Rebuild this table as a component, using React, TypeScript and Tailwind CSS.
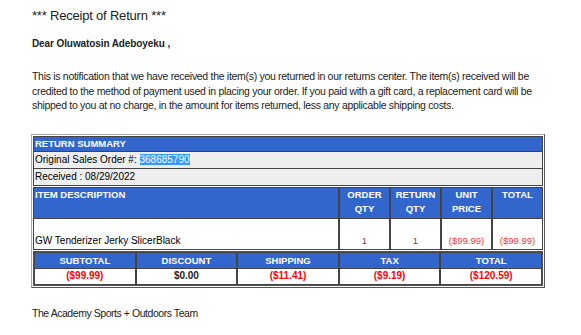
const totals = [
  { label: "SUBTOTAL", value: "($99.99)", red: true },
  { label: "DISCOUNT", value: "$0.00", red: false },
  { label: "SHIPPING", value: "($11.41)", red: true },
  { label: "TAX", value: "($9.19)", red: true },
  { label: "TOTAL", value: "($120.59)", red: true },
];

export default function App() {
  const head = "bg-[#3366cc] text-white font-bold text-[9.5px] border border-[#444]";
  const cell = "border border-[#444] bg-white";

  return (
    <div className="min-h-screen bg-white text-[#222] font-['Liberation_Sans',Arial,sans-serif] pl-[32px] pt-[7px]">
      <div className="text-[13px] leading-[18px] tracking-[-0.2px]">*** Receipt of Return ***</div>
      <div className="mt-[12px] text-[10px] font-bold leading-[14px] tracking-[-0.1px]">Dear Oluwatosin Adeboyeku ,</div>
      <p className="mt-[18px] text-[10.5px] leading-[14.5px] tracking-[-0.3px] whitespace-nowrap">
        This is notification that we have received the item(s) you returned in our returns center. The item(s) received will be
        <br />
        credited to the method of payment used in placing your order. If you paid with a gift card, a replacement card will be
        <br />
        shipped to you at no charge, in the amount for items returned, less any applicable shipping costs.
      </p>

      <div className="mt-[21px] -ml-[1px] w-[514px] border border-t-[#aaa] border-l-[#aaa] border-r-[#555] border-b-[#555] p-[1px] bg-white">
        <div className={`${head} h-[16px] px-[1px] leading-[13px]`}>RETURN SUMMARY</div>
        <div className="h-[17px] border border-t-0 border-[#444] bg-[#eeeeee] text-[10px] text-black leading-[15px] px-[1px]">
          Original Sales Order #: <span className="bg-[#3399ff] text-white">368685790</span>
        </div>
        <div className="h-[17px] border border-t-0 border-[#444] bg-[#eeeeee] text-[10px] text-black leading-[15px] px-[1px]">
          Received : 08/29/2022
        </div>

        <div className="mt-[1px] grid grid-cols-[306px_51px_51px_51px_51px]">
          <div className={`${head} h-[32px] px-[1px] leading-[14px]`}>ITEM DESCRIPTION</div>
          <div className={`${head} h-[32px] text-center leading-[14px]`}>ORDER<br />QTY</div>
          <div className={`${head} h-[32px] text-center leading-[14px]`}>RETURN<br />QTY</div>
          <div className={`${head} h-[32px] text-center leading-[14px]`}>UNIT<br />PRICE</div>
          <div className={`${head} h-[32px] text-center leading-[14px]`}>TOTAL</div>
          <div className={`${cell} border-t-0 h-[31px] text-[10px] text-black flex items-end px-[1px] pb-[1px] leading-[14px]`}>
            GW Tenderizer Jerky SlicerBlack
          </div>
          <div className={`${cell} border-t-0 h-[31px] text-[9.5px] text-[#993333] flex items-end justify-center pb-[1px] leading-[14px]`}>1</div>
          <div className={`${cell} border-t-0 h-[31px] text-[9.5px] text-[#993333] flex items-end justify-center pb-[1px] leading-[14px]`}>1</div>
          <div className={`${cell} border-t-0 h-[31px] text-[9.5px] text-[#ff3333] flex items-end justify-center pb-[1px] leading-[14px]`}>($99.99)</div>
          <div className={`${cell} border-t-0 h-[31px] text-[9.5px] text-[#ff3333] flex items-end justify-center pb-[1px] leading-[14px]`}>($99.99)</div>
        </div>

        <div className="mt-[1px] border border-[#555] grid grid-cols-5">
          {totals.map((t) => (
            <div key={t.label} className="h-[17px] bg-[#3366cc] text-white font-bold text-[9.5px] text-center leading-[15px] border border-[#444]">
              {t.label}
            </div>
          ))}
          {totals.map((t) => (
            <div
              key={t.value}
              className={`h-[16px] bg-white font-bold text-[10px] text-center leading-[14px] border border-t-0 border-[#444] ${t.red ? "text-[#ff0000]" : "text-[#222]"}`}
            >
              {t.value}
            </div>
          ))}
        </div>
      </div>

      <div className="mt-[18px] text-[10.5px] leading-[14px] tracking-[-0.45px]">The Academy Sports + Outdoors Team</div>
    </div>
  );
}
